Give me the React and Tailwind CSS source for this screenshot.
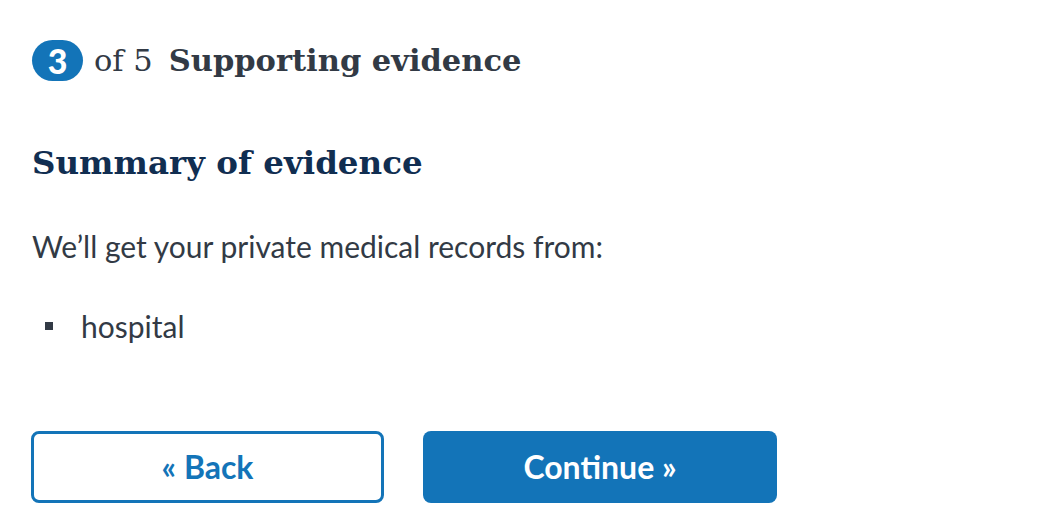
export default function App() {
  return (
    <div className="min-h-screen bg-white px-8 pt-[38px] text-[#323a45]">
      {/* step header */}
      <div className="flex items-center">
        <span className="flex h-[41px] w-[51px] items-center justify-center rounded-full bg-[#1374b8] font-['Lato',sans-serif] text-[34px] font-black leading-none text-white">
          3
        </span>
        <span className="ml-[11px] font-['DejaVu_Serif',serif] text-[30.5px]">of 5</span>
        <h1 className="ml-[16px] font-['DejaVu_Serif',serif] text-[30.5px] font-bold">
          Supporting evidence
        </h1>
      </div>

      <h2 className="mt-[58px] font-['DejaVu_Serif',serif] text-[32.5px] font-bold leading-[42px] text-[#112e51]">
        Summary of evidence
      </h2>

      <p className="mt-[44px] font-['Lato',sans-serif] text-[30px] leading-[36px]">
        We’ll get your private medical records from:
      </p>

      <ul className="mt-[44px] font-['Lato',sans-serif] text-[30px] leading-[36px]">
        <li className="flex items-center">
          <span className="ml-[13px] mr-[28px] h-[8px] w-[8px] bg-[#323a45]" />
          hospital
        </li>
      </ul>

      <div className="mt-[87px] -ml-px flex gap-[39px] font-['Lato',sans-serif] text-[32px] font-bold">
        <button className="h-[72px] w-[353px] rounded-[8px] border-[3px] border-[#1374b8] bg-white text-[#1374b8]">
          « Back
        </button>
        <button className="h-[72px] w-[354px] rounded-[8px] bg-[#1374b8] text-white">
          Continue »
        </button>
      </div>
    </div>
  );
}
